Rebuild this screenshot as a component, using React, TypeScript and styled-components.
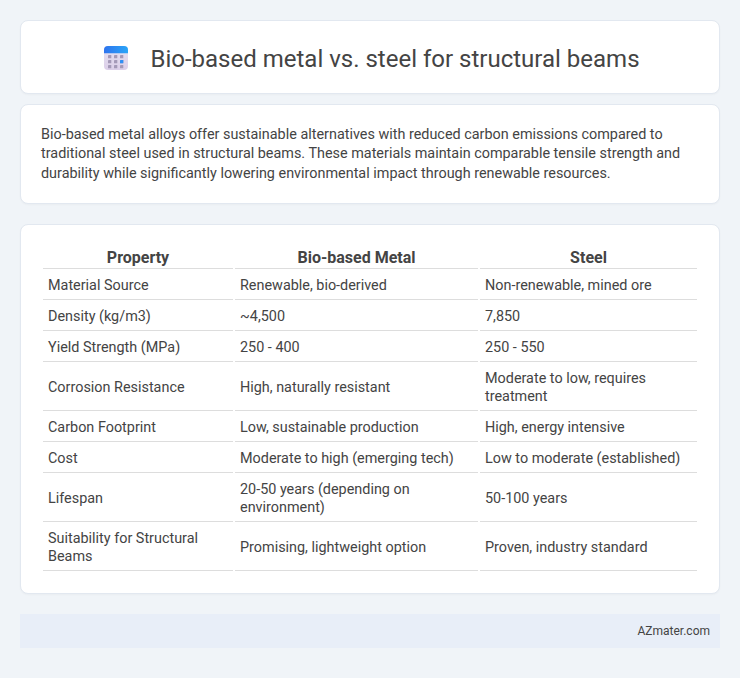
import React from 'react';
import styled, { createGlobalStyle } from 'styled-components';

const ROWS = [
  ['Material Source', 'Renewable, bio-derived', 'Non-renewable, mined ore'],
  ['Density (kg/m3)', '~4,500', '7,850'],
  ['Yield Strength (MPa)', '250 - 400', '250 - 550'],
  ['Corrosion Resistance', 'High, naturally resistant', 'Moderate to low, requires treatment'],
  ['Carbon Footprint', 'Low, sustainable production', 'High, energy intensive'],
  ['Cost', 'Moderate to high (emerging tech)', 'Low to moderate (established)'],
  ['Lifespan', '20-50 years (depending on environment)', '50-100 years'],
  ['Suitability for Structural Beams', 'Promising, lightweight option', 'Proven, industry standard'],
];

export default function App() {
  return (
    <>
      <GlobalStyle />
      <Page>
        <HeaderCard>
          <CalendarIcon />
          <Title>Bio-based metal vs. steel for structural beams</Title>
        </HeaderCard>

        <IntroCard>
          <Intro>
            Bio-based metal alloys offer sustainable alternatives with reduced carbon emissions compared to
            traditional steel used in structural beams. These materials maintain comparable tensile strength and
            durability while significantly lowering environmental impact through renewable resources.
          </Intro>
        </IntroCard>

        <TableCard>
          <Table>
            <colgroup>
              <PropertyCol />
              <MetalCol />
              <col />
            </colgroup>
            <thead>
              <tr>
                <Th>Property</Th>
                <Th>Bio-based Metal</Th>
                <Th>Steel</Th>
              </tr>
            </thead>
            <tbody>
              {ROWS.map((row) => (
                <tr key={row[0]}>
                  {row.map((cell) => (
                    <Td key={cell}>{cell}</Td>
                  ))}
                </tr>
              ))}
            </tbody>
          </Table>
        </TableCard>

        <Footer>AZmater.com</Footer>
      </Page>
    </>
  );
}

function CalendarIcon() {
  const cols = [8, 14, 20];
  const rows = [13, 18, 23];
  return (
    <IconSvg viewBox="0 0 32 32" aria-hidden="true">
      <defs>
        <linearGradient id="calTop" x1="0" y1="0" x2="1" y2="0">
          <stop offset="0" stopColor="#2f74ee" />
          <stop offset="1" stopColor="#2aa5f7" />
        </linearGradient>
        <linearGradient id="calBody" x1="0" y1="0" x2="0" y2="1">
          <stop offset="0" stopColor="#e6e2f1" />
          <stop offset="1" stopColor="#dccfe9" />
        </linearGradient>
      </defs>
      <rect x="4" y="4" width="24" height="24" rx="4" fill="url(#calBody)" />
      <path d="M4 11.3V8a4 4 0 0 1 4-4h16a4 4 0 0 1 4 4v3.3z" fill="url(#calTop)" />
      {rows.map((y) =>
        cols.map((x) => <rect key={`${x}-${y}`} x={x} y={y} width="3.3" height="3.3" rx="0.4" fill="#a59ab8" />),
      )}
      <rect x="20" y="18" width="3.3" height="3.3" rx="0.4" fill="#2f8ff5" />
    </IconSvg>
  );
}

const GlobalStyle = createGlobalStyle`
  body {
    margin: 0;
    background: #f0f4f8;
    font-family: Roboto, "Liberation Sans", sans-serif;
    color: #444;
  }
`;

const Page = styled.div`
  display: flex;
  flex-direction: column;
  padding: 20px;
`;

const Card = styled.section`
  background: #fff;
  border: 1px solid #e2e8f0;
  border-radius: 8px;
  box-shadow: 0 1px 2px rgba(0, 0, 0, 0.03);
`;

const HeaderCard = styled(Card)`
  display: flex;
  align-items: center;
  justify-content: center;
  height: 74px;
  box-sizing: border-box;
  padding-top: 2px;
  margin-bottom: 10px;
`;

const IconSvg = styled.svg`
  width: 32px;
  height: 32px;
  margin-right: 18px;
  flex: none;
`;

const Title = styled.h1`
  margin: 2px 0 0;
  font-size: 24px;
  font-weight: 400;
  line-height: 32px;
  color: #444;
`;

const IntroCard = styled(Card)`
  padding: 20px;
  margin-bottom: 20px;
`;

const Intro = styled.p`
  margin: 0;
  font-size: 14.4px;
  line-height: 19.33px;
  color: #444;
`;

const TableCard = styled(Card)`
  padding: 20px;
  margin-bottom: 20px;
`;

const Table = styled.table`
  width: 100%;
  border-collapse: separate;
  border-spacing: 2px;
  table-layout: fixed;
  font-size: 14.4px;
  line-height: 18px;
`;

const PropertyCol = styled.col`
  width: 190px;
`;

const MetalCol = styled.col`
  width: 243px;
`;

const Th = styled.th`
  padding: 1px 5px;
  border-bottom: 1px solid #ddd;
  font-size: 16px;
  font-weight: 700;
  line-height: 19px;
  text-align: center;
  color: #444;
`;

const Td = styled.td`
  padding: 6px 5px 4px;
  border-bottom: 1px solid #ddd;
  color: #444;
  vertical-align: middle;
`;

const Footer = styled.footer`
  background: #e8eef8;
  height: 34px;
  box-sizing: border-box;
  display: flex;
  align-items: center;
  justify-content: flex-end;
  padding: 0 10px;
  font-size: 12px;
  color: #444;
`;
